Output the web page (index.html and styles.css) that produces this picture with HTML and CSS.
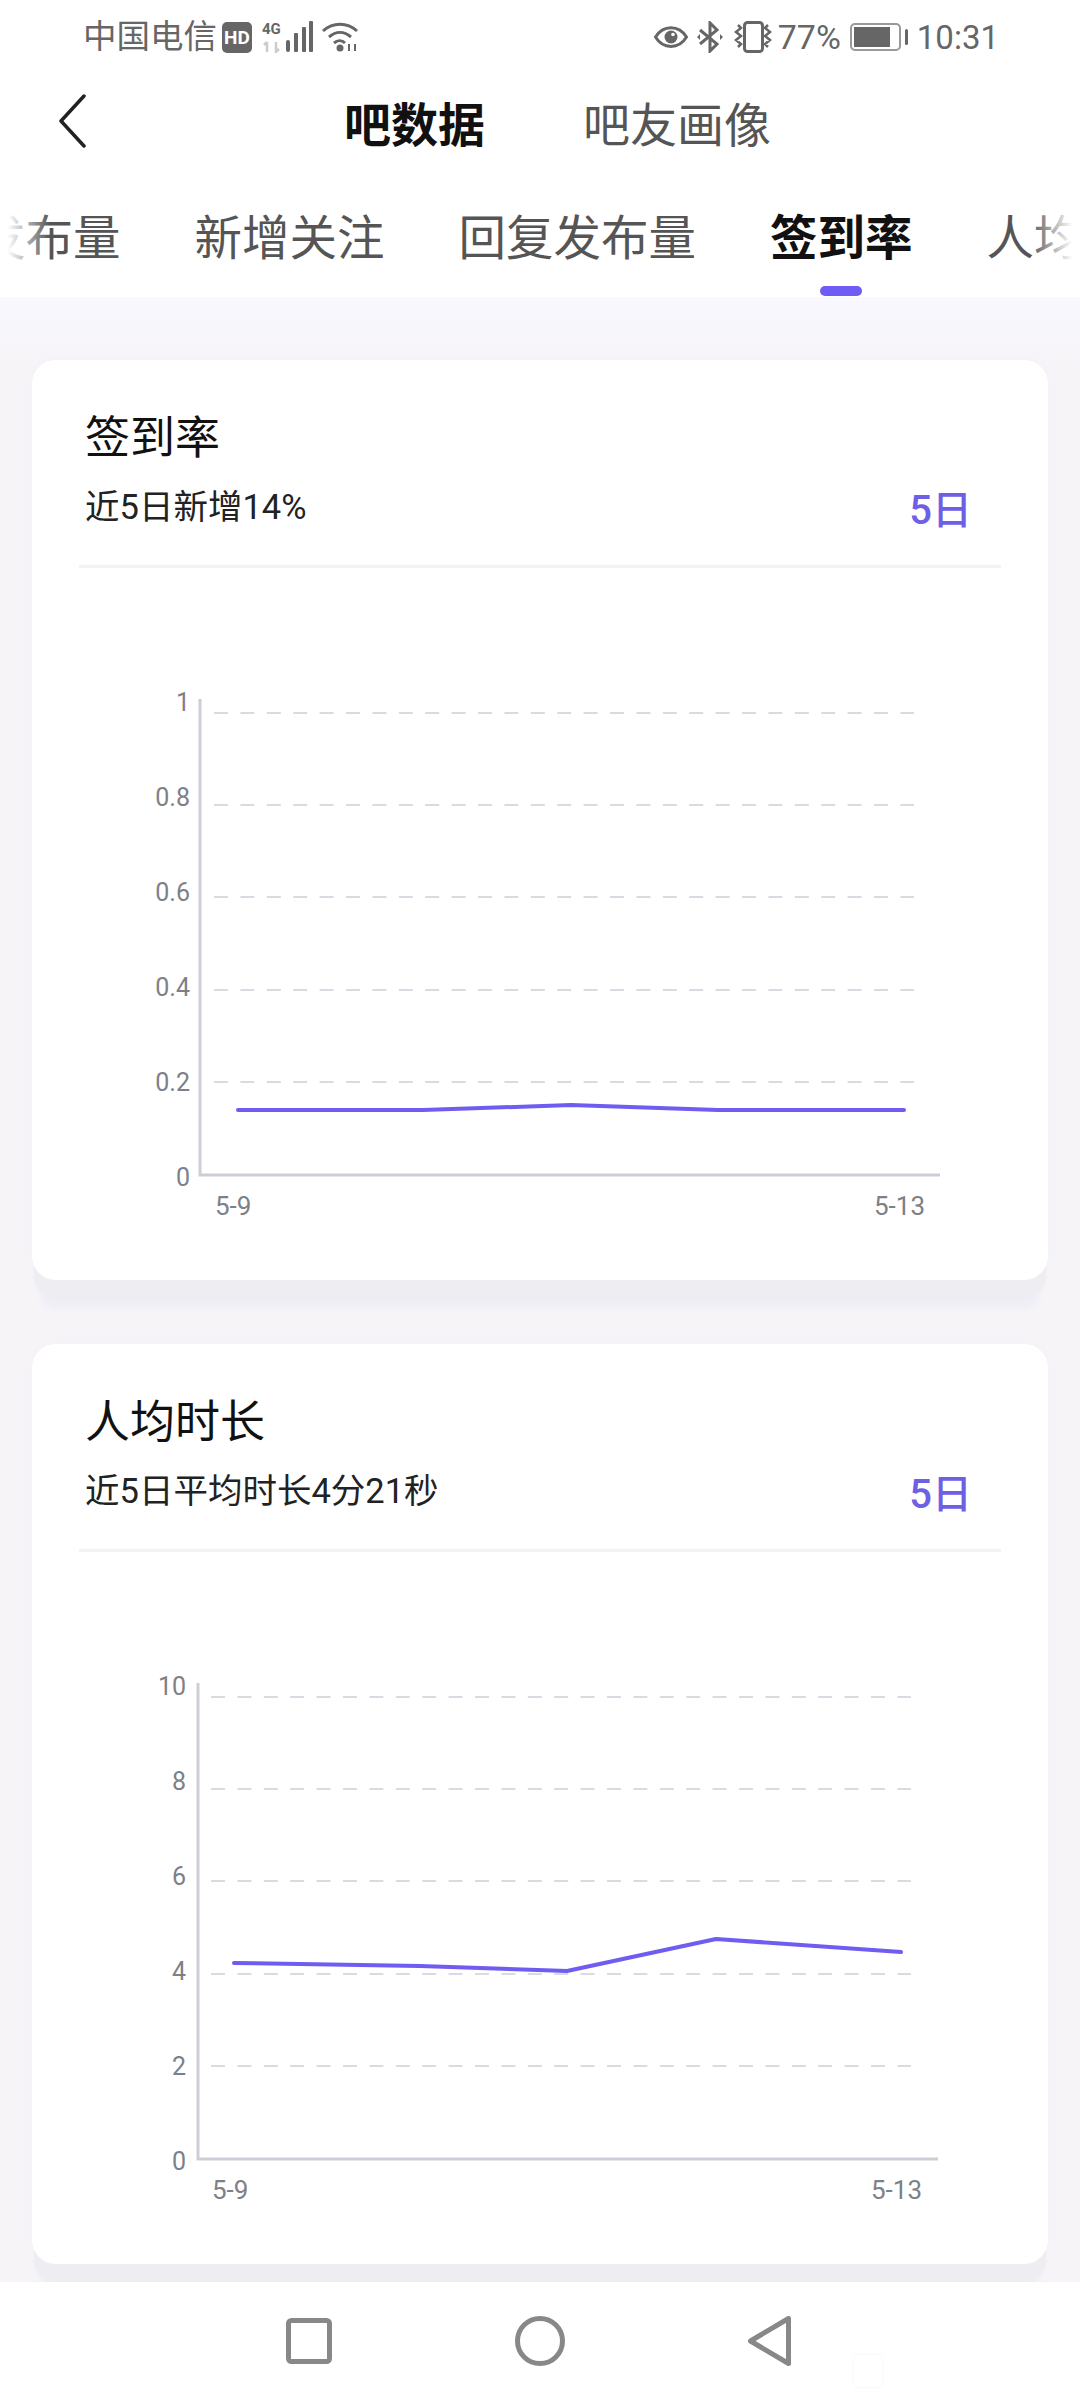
FILE: index.html

```html
<!DOCTYPE html>
<html lang="zh">
<head>
    <meta charset="UTF-8">
    <meta name="viewport" content="width=device-width, initial-scale=1.0">
    <title>吧数据</title>
    <link rel="stylesheet" href="styles.css">
</head>
<body>
<div class="status">
    <div class="status-group">
        <span class="carrier">中国电信</span>
        <svg class="ic-hd" width="30" height="31" viewBox="0 0 30 31"><rect width="30" height="31" rx="5" fill="#666"/><text x="15" y="22" text-anchor="middle" class="hd-text">HD</text></svg>
        <svg class="ic-signal" width="51" height="32" viewBox="0 0 51 32">
            <text x="0" y="13" class="g-text">4G</text>
            <path d="M5 31V21M2 24l3-3M14 21v10l3-3" stroke="#ccc" stroke-width="2.5" fill="none"/>
            <rect x="24" y="19" width="4" height="12" rx="2" fill="#666"/>
            <rect x="32" y="12" width="4" height="19" rx="1" fill="#666"/>
            <rect x="40" y="6" width="4" height="25" rx="1" fill="#666"/>
            <rect x="47" y="0" width="4" height="31" rx="1" fill="#666"/>
        </svg>
        <svg class="ic-wifi" width="37" height="30" viewBox="0 0 37 30" fill="none" stroke="#666" stroke-width="3">
            <path d="M1 9c10-9 24-9 34 0M7 15c7-6 15-6 22 0M12 21c3.500-3 8-3 11 0"/>
            <circle cx="18" cy="26" r="3.500" fill="#666" stroke="none"/>
            <path d="M27 29v-7M33 22v7" stroke-width="2"/>
        </svg>
    </div>
    <div class="status-group">
        <svg class="ic-eye" width="34" height="22" viewBox="0 0 34 22"><path d="M1.500 11C9 -1.500 25 -1.500 32.500 11 25 23.500 9 23.500 1.500 11Z" fill="none" stroke="#666" stroke-width="3"/><circle cx="17" cy="11" r="6.500" fill="#666"/><circle cx="19" cy="8.500" r="1.800" fill="#fff"/></svg>
        <svg class="ic-bt" width="26" height="32" viewBox="0 0 26 32"><path d="M3 9l17 14-7 7V2l7 7L3 23" fill="none" stroke="#666" stroke-width="3"/><path d="M0 16l3-3v6zM26 16l-3-3v6z" fill="#666"/></svg>
        <svg class="ic-vibrate" width="40" height="32" viewBox="0 0 40 32" fill="none" stroke="#666"><rect x="11.500" y="1.500" width="18" height="29" rx="3" stroke-width="3"/><path d="M5 4l3 3-5 4 5 4-5 4 5 4-3 3M35 4l-3 3 5 4-5 4 5 4-5 4 3 3" stroke-width="2.500"/></svg>
        <span class="pct">77%</span>
        <svg class="ic-battery" width="58" height="28" viewBox="0 0 58 28"><rect x="1" y="1" width="49" height="26" rx="4" fill="none" stroke="#999" stroke-width="2"/><rect x="4" y="4" width="36" height="20" fill="#666"/><rect x="55" y="6" width="3" height="16" rx="1.500" fill="#666"/></svg>
        <span class="time">10:31</span>
    </div>
</div>

<div class="topbar">
    <svg class="back" width="28" height="54" viewBox="0 0 28 54"><path d="M26 2L3 27l23 25" fill="none" stroke="#222" stroke-width="3.500" stroke-linecap="round" stroke-linejoin="round"/></svg>
    <span class="topbar-item on">吧数据</span>
    <span class="topbar-item">吧友画像</span>
</div>

<div class="tabs">
    <div class="tabs-track">
        <span class="tab">发布量</span>
        <span class="tab">新增关注</span>
        <span class="tab">回复发布量</span>
        <span class="tab on">签到率</span>
        <span class="tab">人均时长</span>
    </div>
</div>

<main class="content">
    <section class="card">
        <div class="card-head">
            <h2>签到率</h2>
            <div class="card-sub">
                <p>近5日新增14%</p>
                <span class="range">5日</span>
            </div>
        </div>
        <svg class="chart" width="1016" height="712" viewBox="0 0 1016 712">
            <path class="grid" d="M182 145H882M182 237H882M182 329H882M182 422H882M182 514H882"/>
            <path class="axis" d="M168 131V607H908"/>
            <g class="labels">
                <text x="158" y="143">1</text>
                <text x="158" y="238">0.8</text>
                <text x="158" y="333">0.6</text>
                <text x="158" y="428">0.4</text>
                <text x="158" y="523">0.2</text>
                <text x="158" y="618">0</text>
            </g>
            <text class="day" x="183" y="647">5-9</text>
            <text class="day" x="842" y="647">5-13</text>
            <polyline class="line" points="206,542 391,542 539,537 686,542 872,542"/>
        </svg>
    </section>

    <section class="card">
        <div class="card-head">
            <h2>人均时长</h2>
            <div class="card-sub">
                <p>近5日平均时长4分21秒</p>
                <span class="range">5日</span>
            </div>
        </div>
        <svg class="chart" width="1016" height="712" viewBox="0 0 1016 712">
            <path class="grid" d="M179 145H879M179 237H879M179 329H879M179 422H879M179 514H879"/>
            <path class="axis" d="M166 131V607H906"/>
            <g class="labels">
                <text x="154" y="143">10</text>
                <text x="154" y="238">8</text>
                <text x="154" y="333">6</text>
                <text x="154" y="428">4</text>
                <text x="154" y="523">2</text>
                <text x="154" y="618">0</text>
            </g>
            <text class="day" x="180" y="647">5-9</text>
            <text class="day" x="839" y="647">5-13</text>
            <polyline class="line" points="202,411 388,414 535,419 684,387 869,400"/>
        </svg>
    </section>
</main>

<div class="navbar">
    <svg width="46" height="46" viewBox="0 0 46 46"><rect x="2.500" y="2.500" width="41" height="41" rx="3" fill="none" stroke="#888" stroke-width="5"/></svg>
    <svg width="50" height="50" viewBox="0 0 50 50"><circle cx="25" cy="25" r="22.500" fill="none" stroke="#888" stroke-width="5"/></svg>
    <svg width="43" height="50" viewBox="0 0 43 50"><path d="M40.500 2.500V47.500L2.500 25Z" fill="none" stroke="#888" stroke-width="5" stroke-linejoin="round"/></svg>
    <div class="watermark"></div>
</div>
</body>
</html>
```

FILE: styles.css

```css
* {margin:0; padding:0; box-sizing:border-box;}
html, body {width:1080px; height:2400px; overflow:hidden;}
body {display:flex; flex-direction:column; background:#fff; font-family:Roboto, "Noto Sans CJK SC", sans-serif; color:#111;}

/* status bar */
.status {height:60px; padding:14px 81px 0 83px; display:flex; justify-content:space-between; align-items:center; color:#666; font-size:34px;}
.status-group {display:flex; align-items:center;}
.carrier {line-height:46px; font-size:33.5px;}
.ic-hd {margin-left:5px;}
.ic-signal {margin-left:10px;}
.ic-wifi {margin-left:9px;}
.hd-text {font:700 19px Roboto, sans-serif; fill:#fff;}
.g-text {font:700 15px Roboto, sans-serif; fill:#666;}
.ic-bt {margin-left:9px;}
.ic-vibrate {margin-left:10px;}
.pct {margin-left:5px;}
.ic-battery {margin-left:9px;}
.time {margin-left:9px; font-size:33px;}

/* top title */
.topbar {height:120px; padding:2px 0 0 58px; display:flex; align-items:center; font-size:47px;}
.back {margin-right:258px;}
.topbar-item {color:#555; margin-right:98px;}
.topbar-item.on {color:#111; font-weight:700;}

/* tabs */
.tabs {position:relative; height:117px; overflow:hidden;}
.tabs::before, .tabs::after {content:""; position:absolute; top:0; bottom:0; width:50px; z-index:1;}
.tabs::before {left:0; background:linear-gradient(90deg, #fff 15%, rgba(255,255,255,0));}
.tabs::after {right:0; background:linear-gradient(270deg, #fff 15%, rgba(255,255,255,0));}
.tabs-track {display:flex; gap:74px; margin-left:-22px; padding-top:26px; width:1400px;}
.tab {position:relative; font-size:47.5px; line-height:66px; color:#555; white-space:nowrap;}
.tab.on {color:#111; font-weight:700;}
.tab.on::after {content:""; position:absolute; left:50px; top:80px; width:42px; height:10px; border-radius:5px; background:#6f5cf5;}

/* cards */
.content {flex:1; overflow:hidden; padding:63px 32px 0; display:flex; flex-direction:column; gap:64px; background:linear-gradient(#f8f8fe, #f7f4f8 70px);}
.card {height:920px; flex:none; background:#fff; border-radius:24px; box-shadow:0 20px 2px -2px #eeedf1, 0 36px 6px -8px #edeef6, 0 0 12px #f3f2f8;}
.card-head {margin:0 47px; padding-top:53px; height:208px; border-bottom:3px solid #f2f1f6;}
.card-head h2 {padding-left:6px; font-size:45px; font-weight:400; line-height:52px; color:#111;}
.card-sub {display:flex; justify-content:space-between; align-items:center; padding:0 29px 0 6px; margin-top:16px; height:46px;}
.card-sub p {font-size:34.500px; color:#222;}
.range {font-size:40px; font-weight:500; color:#6f5fe6; padding-top:6px;}

/* charts */
.chart {display:block;}
.grid {fill:none; stroke:#dbdae2; stroke-width:2; stroke-dasharray:14 12.4;}
.axis {fill:none; stroke:#cdcdd8; stroke-width:3;}
.labels text {font-size:25px; fill:#7d8087; text-anchor:end;}
.day {font-size:26px; fill:#7d8087;}
.line {fill:none; stroke:#6f5cf0; stroke-width:4; stroke-linecap:round; stroke-linejoin:round;}

/* system nav */
.navbar {position:relative; height:118px; flex:none; background:#fff; padding-left:286px; display:flex; align-items:center; gap:183px;}
.watermark {position:absolute; left:852px; top:72px; width:32px; height:34px; border:1px solid #fafafa; border-radius:6px;}
```
